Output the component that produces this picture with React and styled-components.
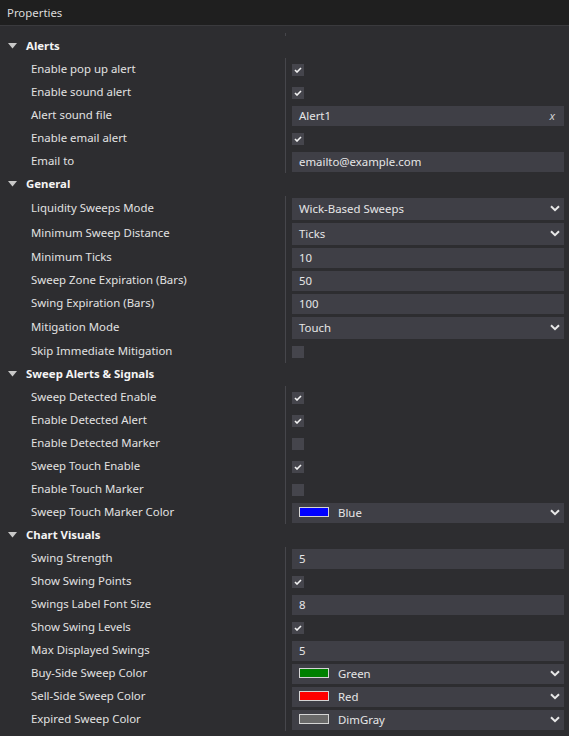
import React from "react"
import styled, { createGlobalStyle } from "styled-components"

const Global = createGlobalStyle`
  html, body {
    margin: 0;
    padding: 0;
    background: #2d2d30;
  }
  body {
    font-family: "Noto Sans", "Open Sans", sans-serif;
    font-size: 11.4px;
    color: #e4e4e4;
  }
`

const Panel = styled.div`
  width: 569px;
  height: 736px;
  overflow: hidden;
  background: #2d2d30;
`

const TitleBar = styled.div`
  height: 26px;
  display: flex;
  align-items: center;
  padding: 0 0 1px 7px;
  box-sizing: border-box;
  background: #1f1f1f;
  border-bottom: 1px solid #3a3a3d;
  color: #dcdcdc;
`

const Spacer = styled.div`
  height: 9px;
  display: grid;
  grid-template-columns: 285px 1fr;
  & > span {
    grid-column: 2;
    align-self: end;
    height: 3px;
    margin-bottom: -1px;
    border-left: 1px solid #46464b;
  }
`

const Header = styled.div`
  height: 23px;
  display: flex;
  align-items: center;
  gap: 9px;
  padding: 0 0 2px 8px;
  box-sizing: border-box;
  font-weight: 700;
  color: #f4f4f4;
`

const Caret = styled.svg`
  width: 9px;
  height: 6px;
`

const Row = styled.div`
  height: ${p => (p.$tall ? 25 : 23)}px;
  display: grid;
  grid-template-columns: 285px 1fr;
`

const Label = styled.div`
  display: flex;
  align-items: center;
  padding-left: 31px;
  padding-bottom: 2px;
  color: #e2e2e2;
  white-space: nowrap;
`

const Value = styled.div`
  display: flex;
  align-items: center;
  padding: 0 5px 0 6px;
  border-left: 1px solid #46464b;
`

const Field = styled.div`
  flex: 1;
  height: ${p => (p.$tall ? 22 : 20)}px;
  display: flex;
  align-items: center;
  gap: 9px;
  padding: 0 4px 1px 7px;
  box-sizing: border-box;
  background: #3f3f46;
  color: #e6e6e6;
`

const FieldText = styled.span`
  flex: 1;
`

const Clear = styled.span`
  font-style: italic;
  color: #d0d0d0;
  padding-right: 5px;
`

const Swatch = styled.span`
  width: 28px;
  height: 8px;
  background: ${p => p.$color};
  border: 1px solid #d4d4d4;
`

const Box = styled.div`
  width: 12px;
  height: 12px;
  background: #45454c;
  display: flex;
  align-items: center;
  justify-content: center;
`

const Check = () => (
  <svg width="8" height="6" viewBox="0 0 8 6">
    <path d="M1 3 L3 5 L7 1" stroke="#f2f2f2" strokeWidth="1.6" fill="none" />
  </svg>
)

const Chevron = () => (
  <svg width="10" height="7" viewBox="0 0 10 7">
    <path d="M1 1.2 L5 5.2 L9 1.2" stroke="#e8e8e8" strokeWidth="2" fill="none" />
  </svg>
)

function Section({ title, children }) {
  return (
    <>
      <Header>
        <Caret viewBox="0 0 9 6">
          <path d="M0 0 H9 L4.5 5.5 Z" fill="#c8c8c8" />
        </Caret>
        {title}
      </Header>
      {children}
    </>
  )
}

function Prop({ label, type, value, color }) {
  let content
  if (type === "check") {
    content = <Box>{value && <Check />}</Box>
  } else if (type === "select") {
    content = (
      <Field $tall>
        <FieldText>{value}</FieldText>
        <Chevron />
      </Field>
    )
  } else if (type === "color") {
    content = (
      <Field>
        <Swatch $color={color} />
        <FieldText>{value}</FieldText>
        <Chevron />
      </Field>
    )
  } else if (type === "file") {
    content = (
      <Field>
        <FieldText>{value}</FieldText>
        <Clear>x</Clear>
      </Field>
    )
  } else {
    content = (
      <Field>
        <FieldText>{value}</FieldText>
      </Field>
    )
  }
  return (
    <Row $tall={type === "select"}>
      <Label>{label}</Label>
      <Value>{content}</Value>
    </Row>
  )
}

export default function App() {
  return (
    <Panel>
      <Global />
      <TitleBar>Properties</TitleBar>
      <Spacer>
        <span />
      </Spacer>
      <Section title="Alerts">
        <Prop label="Enable pop up alert" type="check" value />
        <Prop label="Enable sound alert" type="check" value />
        <Prop label="Alert sound file" type="file" value="Alert1" />
        <Prop label="Enable email alert" type="check" value />
        <Prop label="Email to" type="text" value="emailto@example.com" />
      </Section>
      <Section title="General">
        <Prop label="Liquidity Sweeps Mode" type="select" value="Wick-Based Sweeps" />
        <Prop label="Minimum Sweep Distance" type="select" value="Ticks" />
        <Prop label="Minimum Ticks" type="text" value="10" />
        <Prop label="Sweep Zone Expiration (Bars)" type="text" value="50" />
        <Prop label="Swing Expiration (Bars)" type="text" value="100" />
        <Prop label="Mitigation Mode" type="select" value="Touch" />
        <Prop label="Skip Immediate Mitigation" type="check" value={false} />
      </Section>
      <Section title="Sweep Alerts & Signals">
        <Prop label="Sweep Detected Enable" type="check" value />
        <Prop label="Enable Detected Alert" type="check" value />
        <Prop label="Enable Detected Marker" type="check" value={false} />
        <Prop label="Sweep Touch Enable" type="check" value />
        <Prop label="Enable Touch Marker" type="check" value={false} />
        <Prop label="Sweep Touch Marker Color" type="color" value="Blue" color="#0000ff" />
      </Section>
      <Section title="Chart Visuals">
        <Prop label="Swing Strength" type="text" value="5" />
        <Prop label="Show Swing Points" type="check" value />
        <Prop label="Swings Label Font Size" type="text" value="8" />
        <Prop label="Show Swing Levels" type="check" value />
        <Prop label="Max Displayed Swings" type="text" value="5" />
        <Prop label="Buy-Side Sweep Color" type="color" value="Green" color="#008000" />
        <Prop label="Sell-Side Sweep Color" type="color" value="Red" color="#ff0000" />
        <Prop label="Expired Sweep Color" type="color" value="DimGray" color="#696969" />
      </Section>
    </Panel>
  )
}
